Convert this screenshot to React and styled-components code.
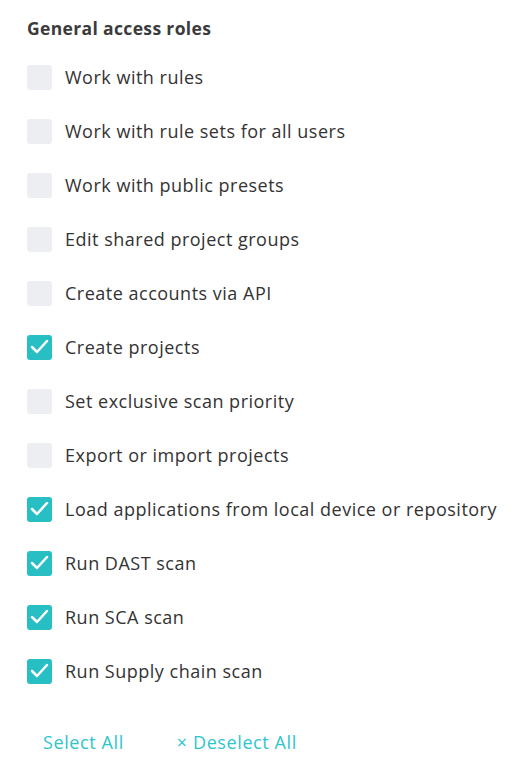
import React from "react";
import styled, { createGlobalStyle } from "styled-components";

const Global = createGlobalStyle`
  html, body { margin: 0; padding: 0; background: #fff; }
  body { font-family: "Open Sans", "Noto Sans", sans-serif; }
`;

const Panel = styled.div`
  padding: 16px 0 0 27px;
  display: flex;
  flex-direction: column;
`;

const Title = styled.h3`
  margin: 0 0 10px;
  font-size: 17.5px;
  font-weight: 700;
  letter-spacing: 0.35px;
  color: #3b3b3b;
  line-height: 24px;
`;

const List = styled.div`
  display: flex;
  flex-direction: column;
`;

const Row = styled.label`
  display: flex;
  align-items: center;
  gap: 13px;
  height: 54px;
`;

const Box = styled.span`
  width: 25px;
  height: 25px;
  border-radius: 3px;
  background: ${(p) => (p.$checked ? "#28bfc4" : "#eceef2")};
  display: flex;
  flex-shrink: 0;
`;

const Label = styled.span`
  font-size: 18px;
  letter-spacing: 0.5px;
  color: #333;
`;

const Actions = styled.div`
  display: flex;
  gap: 53px;
  padding: 32px 0 0 16px;
`;

const LinkButton = styled.button`
  border: none;
  background: none;
  padding: 0;
  font: inherit;
  font-size: 18px;
  letter-spacing: 0.6px;
  color: #2ec5cb;
  cursor: pointer;
`;

const items = [
  ["Work with rules", false],
  ["Work with rule sets for all users", false],
  ["Work with public presets", false],
  ["Edit shared project groups", false],
  ["Create accounts via API", false],
  ["Create projects", true],
  ["Set exclusive scan priority", false],
  ["Export or import projects", false],
  ["Load applications from local device or repository", true],
  ["Run DAST scan", true],
  ["Run SCA scan", true],
  ["Run Supply chain scan", true],
];

const Check = () => (
  <svg width="25" height="25" viewBox="0 0 25 25">
    <path d="M5 12 L10 17 L20 6" fill="none" stroke="#fff" strokeWidth="2.5" strokeLinecap="round" strokeLinejoin="round" />
  </svg>
);

export default function App() {
  return (
    <>
      <Global />
      <Panel>
        <Title>General access roles</Title>
        <List>
          {items.map(([t, c]) => (
            <Row key={t}>
              <Box $checked={c}>{c && <Check />}</Box>
              <Label>{t}</Label>
            </Row>
          ))}
        </List>
        <Actions>
          <LinkButton>Select All</LinkButton>
          <LinkButton>× Deselect All</LinkButton>
        </Actions>
      </Panel>
    </>
  );
}
